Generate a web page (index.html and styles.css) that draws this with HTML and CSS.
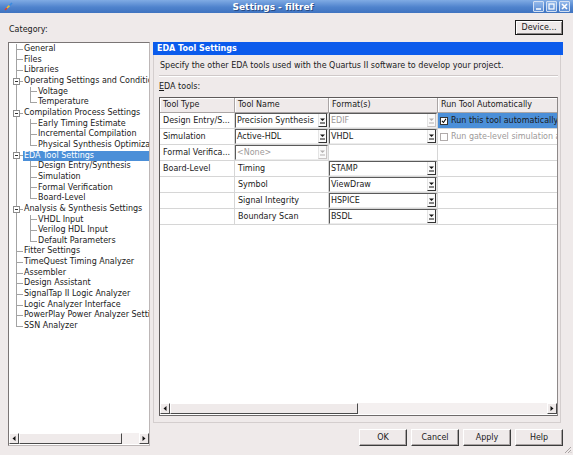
FILE: index.html
```html
<!DOCTYPE html>
<html lang="en">
<head>
    <meta charset="UTF-8">
    <title>Settings - filtref</title>
    <link rel="stylesheet" href="styles.css">
</head>
<body>
<div class="window">
    <div class="titlebar">
        <svg class="app-icon" viewBox="0 0 9 9">
            <path d="M1 8 L3 6" stroke="#e23c2c" stroke-width="1.6"/>
            <path d="M3 6 L5.5 3.5" stroke="#f2c12e" stroke-width="1.6"/>
            <path d="M5.5 3.5 L8 1" stroke="#3a8be0" stroke-width="1.6"/>
        </svg>
        <div class="title">Settings - filtref</div>
        <div class="win-buttons">
            <span class="win-btn"><svg viewBox="0 0 9 9"><path d="M2 7h5" stroke="#fff" stroke-width="1.5"/></svg></span>
            <span class="win-btn"><svg viewBox="0 0 9 9"><rect x="2" y="2" width="5" height="5" fill="none" stroke="#fff" stroke-width="1.2"/></svg></span>
            <span class="win-btn"><svg viewBox="0 0 9 9"><path d="M2 2l5 5M7 2l-5 5" stroke="#fff" stroke-width="1.6"/></svg></span>
        </div>
    </div>

    <div class="top-row">
        <span class="caption">Category:</span>
        <button class="button device">Device...</button>
    </div>

    <div class="main">
        <div class="tree-box">
            <div class="tree">
                <div class="row"><span class="g tee"></span><span class="item">General</span></div>
                <div class="row"><span class="g tee"></span><span class="item">Files</span></div>
                <div class="row"><span class="g tee"></span><span class="item">Libraries</span></div>
                <div class="row"><span class="g tee"><span class="exp"></span></span><span class="item">Operating Settings and Conditions</span></div>
                <div class="row"><span class="g pipe"></span><span class="g tee"></span><span class="item">Voltage</span></div>
                <div class="row"><span class="g pipe"></span><span class="g ell"></span><span class="item">Temperature</span></div>
                <div class="row"><span class="g tee"><span class="exp"></span></span><span class="item">Compilation Process Settings</span></div>
                <div class="row"><span class="g pipe"></span><span class="g tee"></span><span class="item">Early Timing Estimate</span></div>
                <div class="row"><span class="g pipe"></span><span class="g tee"></span><span class="item">Incremental Compilation</span></div>
                <div class="row"><span class="g pipe"></span><span class="g ell"></span><span class="item">Physical Synthesis Optimizations</span></div>
                <div class="row"><span class="g tee"><span class="exp"></span></span><span class="item selected">EDA Tool Settings</span></div>
                <div class="row"><span class="g pipe"></span><span class="g tee"></span><span class="item">Design Entry/Synthesis</span></div>
                <div class="row"><span class="g pipe"></span><span class="g tee"></span><span class="item">Simulation</span></div>
                <div class="row"><span class="g pipe"></span><span class="g tee"></span><span class="item">Formal Verification</span></div>
                <div class="row"><span class="g pipe"></span><span class="g ell"></span><span class="item">Board-Level</span></div>
                <div class="row"><span class="g tee"><span class="exp"></span></span><span class="item">Analysis &amp; Synthesis Settings</span></div>
                <div class="row"><span class="g pipe"></span><span class="g tee"></span><span class="item">VHDL Input</span></div>
                <div class="row"><span class="g pipe"></span><span class="g tee"></span><span class="item">Verilog HDL Input</span></div>
                <div class="row"><span class="g pipe"></span><span class="g ell"></span><span class="item">Default Parameters</span></div>
                <div class="row"><span class="g tee"></span><span class="item">Fitter Settings</span></div>
                <div class="row"><span class="g tee"></span><span class="item">TimeQuest Timing Analyzer</span></div>
                <div class="row"><span class="g tee"></span><span class="item">Assembler</span></div>
                <div class="row"><span class="g tee"></span><span class="item">Design Assistant</span></div>
                <div class="row"><span class="g tee"></span><span class="item">SignalTap II Logic Analyzer</span></div>
                <div class="row"><span class="g tee"></span><span class="item">Logic Analyzer Interface</span></div>
                <div class="row"><span class="g tee"></span><span class="item">PowerPlay Power Analyzer Settings</span></div>
                <div class="row"><span class="g ell"></span><span class="item">SSN Analyzer</span></div>
            </div>
            <div class="hscroll">
                <span class="sb-arrow"><svg viewBox="0 0 4 5"><path d="M3.5 0v5L0.5 2.5z"/></svg></span>
                <span class="sb-thumb tree-thumb"></span>
                <span class="sb-trough"></span>
                <span class="sb-arrow"><svg viewBox="0 0 4 5"><path d="M0.5 0v5L3.5 2.5z"/></svg></span>
            </div>
        </div>

        <div class="right">
            <div class="page-header">EDA Tool Settings</div>
            <div class="page">
                <p class="desc">Specify the other EDA tools used with the Quartus II software to develop your project.</p>
                <div class="sep"></div>
                <div class="label"><u>E</u>DA tools:</div>
                <div class="table-frame">
                    <div class="grid-wrap">
                        <div class="grid">
                            <div class="th">Tool Type</div>
                            <div class="th">Tool Name</div>
                            <div class="th">Format(s)</div>
                            <div class="th">Run Tool Automatically</div>

                            <div class="td">Design Entry/S...</div>
                            <div class="td cb"><div class="combo"><span class="combo-text">Precision Synthesis</span><span class="arrow"><svg viewBox="0 0 7 7"><path d="M1 1.5h5L3.5 4z"/><path d="M1 6h5" stroke="currentColor"/></svg></span></div></div>
                            <div class="td cb"><div class="combo disabled"><span class="combo-text">EDIF</span><span class="arrow"><svg viewBox="0 0 7 7"><path d="M1 1.5h5L3.5 4z"/><path d="M1 6h5" stroke="currentColor"/></svg></span></div></div>
                            <div class="td run selected"><span class="check"><svg viewBox="0 0 8 8"><path d="M1.3 3.8l2 2.2 3.4-5" stroke="#000" stroke-width="1.4" fill="none"/></svg></span>Run this tool automatically</div>

                            <div class="td">Simulation</div>
                            <div class="td cb"><div class="combo"><span class="combo-text">Active-HDL</span><span class="arrow"><svg viewBox="0 0 7 7"><path d="M1 1.5h5L3.5 4z"/><path d="M1 6h5" stroke="currentColor"/></svg></span></div></div>
                            <div class="td cb"><div class="combo"><span class="combo-text">VHDL</span><span class="arrow"><svg viewBox="0 0 7 7"><path d="M1 1.5h5L3.5 4z"/><path d="M1 6h5" stroke="currentColor"/></svg></span></div></div>
                            <div class="td run disabled"><span class="check"></span>Run gate-level simulation automatically after compilation</div>

                            <div class="td">Formal Verifica...</div>
                            <div class="td cb"><div class="combo disabled"><span class="combo-text">&lt;None&gt;</span><span class="arrow"><svg viewBox="0 0 7 7"><path d="M1 1.5h5L3.5 4z"/><path d="M1 6h5" stroke="currentColor"/></svg></span></div></div>
                            <div class="td"></div>
                            <div class="td"></div>

                            <div class="td">Board-Level</div>
                            <div class="td">Timing</div>
                            <div class="td cb"><div class="combo"><span class="combo-text">STAMP</span><span class="arrow"><svg viewBox="0 0 7 7"><path d="M1 1.5h5L3.5 4z"/><path d="M1 6h5" stroke="currentColor"/></svg></span></div></div>
                            <div class="td"></div>

                            <div class="td"></div>
                            <div class="td">Symbol</div>
                            <div class="td cb"><div class="combo"><span class="combo-text">ViewDraw</span><span class="arrow"><svg viewBox="0 0 7 7"><path d="M1 1.5h5L3.5 4z"/><path d="M1 6h5" stroke="currentColor"/></svg></span></div></div>
                            <div class="td"></div>

                            <div class="td"></div>
                            <div class="td">Signal Integrity</div>
                            <div class="td cb"><div class="combo"><span class="combo-text">HSPICE</span><span class="arrow"><svg viewBox="0 0 7 7"><path d="M1 1.5h5L3.5 4z"/><path d="M1 6h5" stroke="currentColor"/></svg></span></div></div>
                            <div class="td"></div>

                            <div class="td"></div>
                            <div class="td">Boundary Scan</div>
                            <div class="td cb"><div class="combo"><span class="combo-text">BSDL</span><span class="arrow"><svg viewBox="0 0 7 7"><path d="M1 1.5h5L3.5 4z"/><path d="M1 6h5" stroke="currentColor"/></svg></span></div></div>
                            <div class="td"></div>
                        </div>
                    </div>
                    <div class="hscroll">
                        <span class="sb-arrow"><svg viewBox="0 0 4 5"><path d="M3.5 0v5L0.5 2.5z"/></svg></span>
                        <span class="sb-thumb table-thumb"></span>
                        <span class="sb-trough"></span>
                        <span class="sb-arrow"><svg viewBox="0 0 4 5"><path d="M0.5 0v5L3.5 2.5z"/></svg></span>
                    </div>
                </div>
            </div>
            <div class="dialog-buttons">
                <button class="button">OK</button>
                <button class="button">Cancel</button>
                <button class="button">Apply</button>
                <button class="button">Help</button>
            </div>
        </div>
    </div>

    <svg class="grip" viewBox="0 0 8 8">
        <path d="M7 1L1 7M7 4L4 7M7 6.5L6.5 7" stroke="#a9a3a3" stroke-width="1"/>
    </svg>
</div>
</body>
</html>
```

FILE: styles.css
```css
* {
    box-sizing: border-box;
}
body {
    margin: 0;
    background-color: #efeaea;
    font-family: "DejaVu Sans", sans-serif;
    font-size: 8px;
    color: #1a1a1a;
}
.window {
    width: 573px;
    height: 455px;
    display: flex;
    flex-direction: column;
    position: relative;
    overflow: hidden;
}

/* title bar */
.titlebar {
    height: 13px;
    flex: none;
    display: flex;
    align-items: center;
    padding: 0 3px 0 4px;
    background: linear-gradient(#80abe4, #4f83cd 55%, #3f73c0);
}
.app-icon {
    width: 9px;
    height: 9px;
}
.title {
    flex: 1;
    text-align: center;
    color: #fff;
    font-weight: bold;
    font-size: 9px;
    text-shadow: 1px 1px 0 #284c86;
}
.win-buttons {
    display: flex;
    gap: 2px;
}
.win-btn {
    width: 11px;
    height: 11px;
    border: 1px solid #d3e0f3;
    border-radius: 1px;
    background: linear-gradient(#93b8ea, #5d8ed4);
    display: flex;
    align-items: center;
    justify-content: center;
}
.win-btn svg {
    width: 9px;
    height: 9px;
}

/* top row */
.top-row {
    height: 29px;
    flex: none;
    display: flex;
    justify-content: space-between;
    align-items: flex-start;
    padding: 7px 10px 0 9px;
}
.caption {
    margin-top: 4px;
    line-height: 11px;
}
.button {
    width: 48px;
    height: 17px;
    padding: 0;
    font-family: "DejaVu Sans", sans-serif;
    font-size: 8px;
    color: #1a1a1a;
    background-color: #efeaea;
    border: 1px solid;
    border-color: #fff #3c3c3c #3c3c3c #fff;
    box-shadow: inset -1px -1px 0 #aaa4a4;
}
.device {
    height: 15px;
    border-color: #1c1c1c;
    box-shadow: inset 1px 1px 0 #fff, inset -1px -1px 0 #8a8585;
}

/* main area */
.main {
    flex: 1;
    min-height: 0;
    display: flex;
    gap: 3px;
    padding: 0 10px 9px 8px;
}

/* category tree */
.tree-box {
    width: 142px;
    flex: none;
    display: flex;
    flex-direction: column;
    background-color: #fff;
    border: 1px solid;
    border-color: #7a7575 #bdb7b7 #bdb7b7 #7a7575;
}
.tree {
    flex: 1;
    overflow: hidden;
    padding-top: 1px;
}
.row {
    height: 10.67px;
    display: flex;
    white-space: nowrap;
}
.g {
    width: 14px;
    flex: none;
    display: flex;
    align-items: center;
}
.tee {
    background:
        linear-gradient(#a3a3a3, #a3a3a3) 7px 0 / 1px 100% no-repeat,
        linear-gradient(#a3a3a3, #a3a3a3) 7px 50% / 7px 1px no-repeat;
}
.ell {
    background:
        linear-gradient(#a3a3a3, #a3a3a3) 7px 0 / 1px 50% no-repeat,
        linear-gradient(#a3a3a3, #a3a3a3) 7px 50% / 7px 1px no-repeat;
}
.pipe {
    background: linear-gradient(#a3a3a3, #a3a3a3) 7px 0 / 1px 100% no-repeat;
}
.exp {
    width: 7px;
    height: 7px;
    margin-left: 4px;
    border: 1px solid #8c8c8c;
    background: linear-gradient(#333, #333) center / 3px 1px no-repeat, #fff;
}
.item {
    flex: 1;
    min-width: 0;
    overflow: hidden;
    padding-left: 1px;
    line-height: 10.67px;
}
.item.selected {
    background-color: #4b8fd8;
    color: #fff;
}

/* scrollbars */
.hscroll {
    height: 11px;
    flex: none;
    display: flex;
    background-color: #f4f0f0;
    margin-bottom: 1px;
}
.sb-arrow {
    width: 10px;
    flex: none;
    display: flex;
    align-items: center;
    justify-content: center;
    border: 1px solid;
    border-color: #fff #4a4a4a #4a4a4a #fff;
    background-color: #efeaea;
}
.sb-arrow svg {
    width: 4px;
    height: 5px;
    fill: #111;
}
.sb-thumb {
    flex: none;
    border: 1px solid;
    border-color: #fff #4a4a4a #4a4a4a #fff;
    background-color: #efeaea;
}
.tree-thumb {
    width: 103px;
}
.table-thumb {
    width: 188px;
}
.sb-trough {
    flex: 1;
}

/* right page */
.right {
    flex: 1;
    min-width: 0;
    display: flex;
    flex-direction: column;
}
.page-header {
    height: 13px;
    flex: none;
    padding-left: 4px;
    line-height: 13px;
    background-color: #0b5bec;
    color: #fff;
    font-weight: bold;
}
.page {
    flex: 1;
    min-width: 0;
    min-height: 0;
    display: flex;
    flex-direction: column;
    margin-right: 2px;
    padding: 5px 2px 6px 5px;
    border: 1px solid #d4cece;
    border-top: none;
}
.desc {
    margin: 0;
    padding-left: 1px;
    line-height: 11px;
    white-space: nowrap;
}
.sep {
    height: 2px;
    margin: 4px 0 4px 0;
    border-top: 1px solid #cfc9c9;
    border-bottom: 1px solid #fff;
}
.label {
    line-height: 11px;
}
.table-frame {
    flex: 1;
    min-width: 0;
    min-height: 0;
    margin-top: 5px;
    display: flex;
    flex-direction: column;
    background-color: #fff;
    border: 1px solid;
    border-color: #5e5a5a #8e8989 #6e6a6a #5e5a5a;
}
.grid-wrap {
    flex: 1;
    min-height: 0;
    overflow: hidden;
}
.grid {
    display: grid;
    grid-template-columns: 75px 94px 109px 170px;
    grid-template-rows: 15px;
    grid-auto-rows: 16px;
}
.th {
    padding-left: 3px;
    line-height: 14px;
    white-space: nowrap;
    background-color: #efeaea;
    border-right: 1px solid #aaa5a5;
    border-bottom: 1px solid #aaa5a5;
    box-shadow: inset 1px 1px 0 #fff;
}
.td {
    padding-left: 3px;
    line-height: 15px;
    white-space: nowrap;
    overflow: hidden;
    border-right: 1px solid #d6d6d6;
    border-bottom: 1px solid #d6d6d6;
}
.td.cb {
    padding-left: 0;
}

/* combo boxes */
.combo {
    height: 15px;
    display: flex;
    background-color: #fff;
    border: 1px solid;
    border-color: #5a5a5a #ececec #ececec #5a5a5a;
}
.combo-text {
    flex: 1;
    min-width: 0;
    overflow: hidden;
    padding-left: 1px;
    line-height: 13px;
}
.arrow {
    width: 9px;
    flex: none;
    display: flex;
    align-items: center;
    justify-content: center;
    color: #111;
    background-color: #fafafa;
    border-left: 1px solid #e4e4e4;
    border-right: 1px solid #333;
    border-bottom: 1px solid #333;
}
.arrow svg {
    width: 7px;
    height: 7px;
    fill: currentColor;
}
.combo.disabled .combo-text {
    color: #9d9999;
}
.combo.disabled .arrow {
    color: #b3b0b0;
    border-right-color: #c8c4c4;
    border-bottom-color: #c8c4c4;
}

/* run column */
.run {
    display: flex;
    align-items: center;
    gap: 3px;
    padding-left: 2px;
}
.run.selected {
    background-color: #4b8fd8;
}
.run.disabled {
    color: #9d9999;
}
.check {
    width: 8px;
    height: 8px;
    flex: none;
    border: 1px solid #333;
    background-color: #fff;
    display: flex;
}
.check svg {
    width: 6px;
    height: 6px;
}
.run.disabled .check {
    border-color: #b0abab;
}

/* bottom buttons */
.dialog-buttons {
    flex: none;
    display: flex;
    justify-content: flex-end;
    gap: 4px;
    margin-top: 6px;
}

.grip {
    position: absolute;
    right: 1px;
    bottom: 1px;
    width: 8px;
    height: 8px;
}
```
